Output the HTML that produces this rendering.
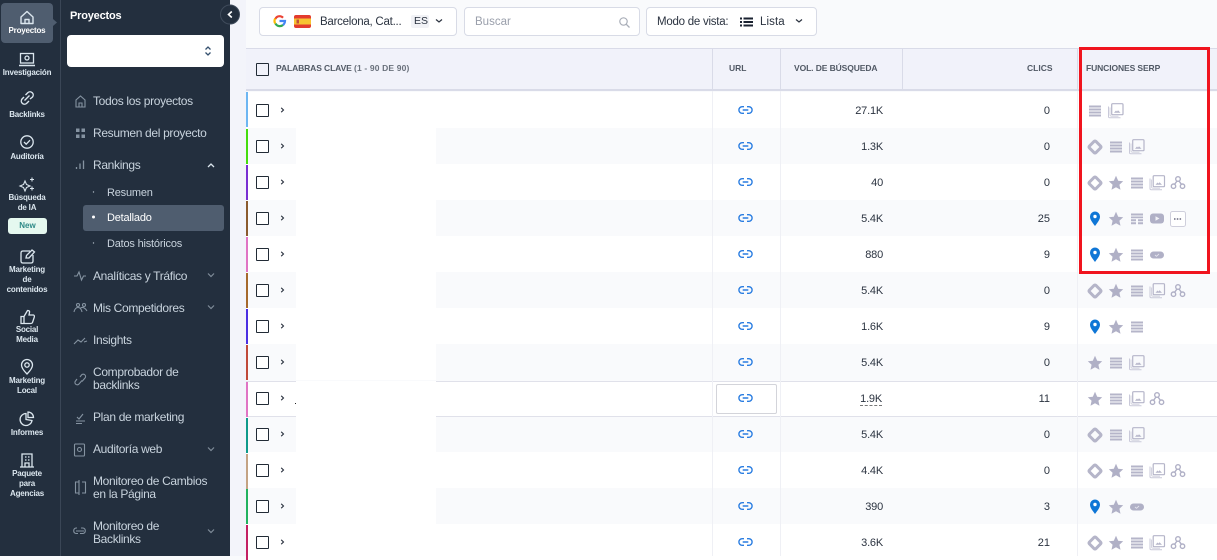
<!DOCTYPE html>
<html lang="es"><head><meta charset="utf-8"><title>Rankings</title>
<style>
html,body{margin:0;padding:0;width:1217px;height:556px;overflow:hidden;background:#f9fafc;font-family:"Liberation Sans",sans-serif}
.a{position:absolute}
.t{position:absolute;white-space:nowrap}
.r{position:absolute;left:246px;width:971px;height:36px}
.r.w{background:#fff}.r.g{background:#f9fafc}
.s{position:absolute;left:246px;width:2px;height:35px}
.b{position:absolute;left:296px;width:140px;height:36px;background:#fff}
.c{position:absolute;left:256px;width:10.500px;height:10.500px;border:1.500px solid #222b36;border-radius:1px;background:#fff}
.rail{position:absolute;width:54px;text-align:center;left:0;color:#dbe6ee;font-size:8px;font-weight:bold;line-height:10px;letter-spacing:-.2px}
.n{position:absolute;left:93px;color:#c8d3dd;font-size:12px;line-height:13px;white-space:nowrap;letter-spacing:-.33px}
.sub{position:absolute;left:107px;color:#c8d3dd;font-size:11px;white-space:nowrap;letter-spacing:-.2px}
.h{position:absolute;top:63px;font-size:8.500px;font-weight:bold;color:#515965;white-space:nowrap}
.v{position:absolute;width:60px;text-align:right;font-size:11px;color:#2b3340;letter-spacing:-.2px}
.k{position:absolute;left:1000px;width:50px;text-align:right;font-size:11px;color:#2b3340}
.box{position:absolute;top:7px;height:27px;background:#fff;border:1px solid #d8dbe6;border-radius:4px}
</style></head><body>

<div class="a" style="left:230px;top:0;width:16px;height:556px;background:#f3f4fa"></div>

<!-- toolbar -->
<div class="box" style="left:259px;width:196px"></div>
<div class="box" style="left:464px;width:174px"></div>
<div class="box" style="left:646px;width:169px"></div>
<div class="t" style="left:320px;top:16px;font-size:11.500px;color:#2b3340;letter-spacing:-.25px">Barcelona, Cat...</div>
<div class="a" style="left:411px;top:15px;width:18px;height:13px;background:#f1f2f6;border-radius:2px"></div>
<div class="t" style="left:414px;top:15px;font-size:10.500px;color:#2b3340">ES</div>
<div class="t" style="left:475px;top:16px;font-size:11.500px;color:#9a9fab">Buscar</div>
<div class="t" style="left:657px;top:16px;font-size:11.500px;color:#2b3340;letter-spacing:-.25px">Modo de vista:</div>
<div class="t" style="left:760px;top:16px;font-size:11.500px;color:#2b3340;letter-spacing:.1px">Lista</div>

<!-- table header -->
<div class="a" style="left:246px;top:48px;width:971px;height:43px;background:#f1f2fa;border-top:1px solid #d9dbe8;border-bottom:2px solid #d9dbe8;box-sizing:border-box"></div>
<div class="a" style="left:256px;top:63px;width:10.500px;height:10.500px;border:1.500px solid #222b36;border-radius:1px"></div>
<div class="h" style="left:276px;letter-spacing:-.1px">PALABRAS CLAVE <span style="letter-spacing:.15px;color:#6a717c">(1 - 90 DE 90)</span></div>
<div class="h" style="left:729px">URL</div>
<div class="h" style="left:794px;letter-spacing:-.1px">VOL. DE BÚSQUEDA</div>
<div class="h" style="left:1027px">CLICS</div>
<div class="h" style="left:1086px;letter-spacing:-.1px">FUNCIONES SERP</div>

<!-- rows -->
<div class="r w" style="top:92px"></div>
<div class="r g" style="top:128px"></div>
<div class="r w" style="top:164px"></div>
<div class="r g" style="top:200px"></div>
<div class="r w" style="top:236px"></div>
<div class="r g" style="top:272px"></div>
<div class="r w" style="top:308px"></div>
<div class="r g" style="top:344px"></div>
<div class="r w" style="top:381px;height:35px"></div>
<div class="r g" style="top:416px"></div>
<div class="r w" style="top:452px"></div>
<div class="r g" style="top:488px"></div>
<div class="r w" style="top:524px"></div>

<div class="b" style="top:128px"></div><div class="b" style="top:200px"></div><div class="b" style="top:272px"></div><div class="b" style="top:344px"></div><div class="b" style="top:416px"></div><div class="b" style="top:488px"></div>

<div class="a" style="left:246px;top:381px;width:971px;height:1px;background:#e0e1ea"></div>
<div class="a" style="left:246px;top:416px;width:971px;height:1px;background:#e0e1ea"></div>
<div class="a" style="left:296px;top:381px;width:140px;height:36px;background:#fff"></div>
<div class="a" style="left:295px;top:403px;width:1px;height:1px;background:#222"></div>

<!-- column lines -->
<div class="a" style="left:712px;top:48px;width:1px;height:43px;background:#d9dbe8"></div>
<div class="a" style="left:780px;top:48px;width:1px;height:43px;background:#d9dbe8"></div>
<div class="a" style="left:902px;top:48px;width:1px;height:43px;background:#d9dbe8"></div>
<div class="a" style="left:1077px;top:48px;width:1px;height:43px;background:#d9dbe8"></div>
<div class="a" style="left:712px;top:91px;width:1px;height:465px;background:#eff0f5"></div>
<div class="a" style="left:780px;top:91px;width:1px;height:465px;background:#eff0f5"></div>
<div class="a" style="left:1077px;top:91px;width:1px;height:465px;background:#eff0f5"></div>

<div class="a" style="left:716px;top:384px;width:59px;height:28px;background:#fff;border:1px solid #d3d4da;border-radius:2px"></div>

<!-- stripes -->
<div class="s" style="top:92px;background:#6db6f2"></div>
<div class="s" style="top:129px;background:#44dd0e"></div>
<div class="s" style="top:165px;background:#7a2fd2"></div>
<div class="s" style="top:201px;background:#8a5a2e"></div>
<div class="s" style="top:237px;background:#e074c4"></div>
<div class="s" style="top:273px;background:#a5692c"></div>
<div class="s" style="top:309px;background:#4b2fe2"></div>
<div class="s" style="top:345px;background:#c0493a"></div>
<div class="s" style="top:382px;background:#e074c4"></div>
<div class="s" style="top:418px;background:#0f9a8a"></div>
<div class="s" style="top:454px;background:#c4a384"></div>
<div class="s" style="top:489px;background:#22b25f"></div>
<div class="s" style="top:525px;background:#c42063"></div>

<!-- checkboxes -->
<div class="c" style="top:104px"></div><div class="c" style="top:140px"></div><div class="c" style="top:176px"></div><div class="c" style="top:212px"></div><div class="c" style="top:248px"></div><div class="c" style="top:284px"></div><div class="c" style="top:320px"></div><div class="c" style="top:356px"></div><div class="c" style="top:392px"></div><div class="c" style="top:428px"></div><div class="c" style="top:464px"></div><div class="c" style="top:500px"></div><div class="c" style="top:536px"></div>

<!-- search volume -->
<div class="v" style="left:823px;top:105px">27.1K</div>
<div class="v" style="left:823px;top:141px">1.3K</div>
<div class="v" style="left:823px;top:177px">40</div>
<div class="v" style="left:823px;top:213px">5.4K</div>
<div class="v" style="left:823px;top:249px">880</div>
<div class="v" style="left:823px;top:285px">5.4K</div>
<div class="v" style="left:823px;top:321px">1.6K</div>
<div class="v" style="left:823px;top:357px">5.4K</div>
<div class="v" style="left:822px;top:393px;"><span style="border-bottom:1px dashed #777">1.9K</span></div>
<div class="v" style="left:823px;top:429px">5.4K</div>
<div class="v" style="left:823px;top:465px">4.4K</div>
<div class="v" style="left:823px;top:501px">390</div>
<div class="v" style="left:823px;top:537px">3.6K</div>

<!-- clicks -->
<div class="k" style="top:105px">0</div>
<div class="k" style="top:141px">0</div>
<div class="k" style="top:177px">0</div>
<div class="k" style="top:213px">25</div>
<div class="k" style="top:249px">9</div>
<div class="k" style="top:285px">0</div>
<div class="k" style="top:321px">9</div>
<div class="k" style="top:357px">0</div>
<div class="k" style="top:393px">11</div>
<div class="k" style="top:429px">0</div>
<div class="k" style="top:465px">0</div>
<div class="k" style="top:501px">3</div>
<div class="k" style="top:537px">21</div>

<!-- sidebar -->
<div class="a" style="left:0;top:0;width:230px;height:556px;background:#232f3e"></div>
<div class="a" style="left:60px;top:0;width:1px;height:556px;background:#3a4656"></div>
<div class="a" style="left:1px;top:3px;width:52px;height:40px;background:#4f5d6f;border-radius:4px"></div>
<div class="a" style="left:67px;top:35px;width:157px;height:32px;background:#fff;border-radius:4px"></div>
<div class="a" style="left:83px;top:205px;width:141px;height:26px;background:#4f5d6f;border-radius:3px"></div>

<div class="rail" style="top:26px;color:#fff">Proyectos</div>
<div class="rail" style="top:68px">Investigación</div>
<div class="rail" style="top:110px">Backlinks</div>
<div class="rail" style="top:152px">Auditoría</div>
<div class="rail" style="top:193px">Búsqueda<br>de IA</div>
<div class="a" style="left:8px;top:218px;width:39px;height:16px;background:#e5f8ef;border-radius:3px;color:#2d8a87;font-size:8px;font-weight:bold;text-align:center;line-height:15px">New</div>
<div class="rail" style="top:265px">Marketing<br>de<br>contenidos</div>
<div class="rail" style="top:325px">Social<br>Media</div>
<div class="rail" style="top:376px">Marketing<br>Local</div>
<div class="rail" style="top:428px">Informes</div>
<div class="rail" style="top:469px">Paquete<br>para<br>Agencias</div>

<div class="t" style="left:70px;top:10px;font-size:11px;font-weight:bold;color:#fff;letter-spacing:-.2px">Proyectos</div>
<div class="n" style="top:95px">Todos los proyectos</div>
<div class="n" style="top:127px">Resumen del proyecto</div>
<div class="n" style="top:159px">Rankings</div>
<div class="sub" style="top:187px">Resumen</div>
<div class="sub" style="top:212px;color:#fff">Detallado</div>
<div class="sub" style="top:238px">Datos históricos</div>
<div class="n" style="top:270px">Analíticas y Tráfico</div>
<div class="n" style="top:302px">Mis Competidores</div>
<div class="n" style="top:334px">Insights</div>
<div class="n" style="top:366px">Comprobador de<br>backlinks</div>
<div class="n" style="top:411px">Plan de marketing</div>
<div class="n" style="top:443px">Auditoría web</div>
<div class="n" style="top:475px">Monitoreo de Cambios<br>en la Página</div>
<div class="n" style="top:520px">Monitoreo de<br>Backlinks</div>

<!-- icons -->
<svg class="a" style="left:0;top:0" width="1217" height="556" viewBox="0 0 1217 556" fill="none">
<defs>
<g id="li"><path d="M-1.500 -3.300H-3.300A3.300 3.300 0 0 0-3.300 3.300H-1.500M1.500 -3.300H3.300A3.300 3.300 0 0 1 3.300 3.300H1.500M-2.800 0H2.800" stroke="#2a7de1" stroke-width="1.400"/></g>
<g id="ch"><path d="M-1.300 -2.200L1 0L-1.300 2.200" stroke="#2b3340" stroke-width="1.100"/></g>
<g id="d"><rect x="-4.600" y="-4.600" width="9.200" height="9.200" rx="1.200" transform="rotate(45)" stroke="#b5b5c9" stroke-width="3"/></g>
<g id="st"><path d="M0 -7.200L2.200 -2.300L7.200 -1.800L3.400 1.700L4.500 6.800L0 4.200L-4.500 6.800L-3.400 1.700L-7.200 -1.800L-2.200 -2.300Z" fill="#b0b0c6"/></g>
<g id="ln"><path d="M-6 -5h12v2h-12zM-6 -2h12v2h-12zM-6 1h12v2h-12zM-6 4h12v2h-12z" fill="#b5b5c9"/></g>
<g id="im"><path d="M-7 -4.500V5.500Q-7 6.800 -5.700 6.800H5" stroke="#c9c9d9" stroke-width="1"/><path d="M-5.500 -3.500V3.800Q-5.500 5.200 -4 5.200H3" stroke="#d4d4e0" stroke-width="1"/><rect x="-3.800" y="-7.300" width="11.300" height="11" rx="1" stroke="#b5b5c9" stroke-width="1.200"/><path d="M-1.500 1.800L0.500 -.5L1.500 .6L2.500 -.8L5 1.800Z" fill="#b5b5c9"/></g>
<g id="tr" stroke="#b0b0c6" stroke-width="1.400"><circle cx="0" cy="-4" r="2.300"/><circle cx="-4.500" cy="3.200" r="2.200"/><circle cx="4.500" cy="3.200" r="2.200"/><path d="M-1 -2L-3.300 1.200M1 -2L3.300 1.200"/></g>
<g id="p"><path d="M0 8C-3 4 -5 1.500 -5 -1.500A5 5 0 0 1 5 -1.500C5 1.500 3 4 0 8Z" fill="#0f76d6"/><circle cx="0" cy="-1.500" r="1.700" fill="#fff"/></g>
<g id="pl"><rect x="-7" y="-3.500" width="14" height="7" rx="3.500" fill="#b0b0c6"/><path d="M-2 0L-.5 1.300L2 -1" stroke="#e4e4ee" stroke-width=".9"/></g>
<g id="ta"><path d="M-6 -5h12v2h-12zM-6 -2h12v1.800h-12zM-6 .8h5v2h-5zM1 .8h5v2h-5zM-6 3.800h5v2h-5zM1 3.800h5v2h-5z" fill="#b5b5c9"/></g>
<g id="vi"><rect x="-7" y="-5" width="14" height="10" rx="3" fill="#b0b0c6"/><path d="M-1.500 -2.200L2.500 0L-1.500 2.200Z" fill="#f1f1f6"/></g>
<g id="chev"><path d="M-3 -1.500L0 1.500L3 -1.500" stroke="#7f8c99" stroke-width="1.200"/></g>
</defs>

<!-- link icons -->
<use href="#li" x="745.500" y="110"/><use href="#li" x="745.500" y="146"/><use href="#li" x="745.500" y="182"/><use href="#li" x="745.500" y="218"/><use href="#li" x="745.500" y="254"/><use href="#li" x="745.500" y="290"/><use href="#li" x="745.500" y="326"/><use href="#li" x="745.500" y="362"/><use href="#li" x="745.500" y="398"/><use href="#li" x="745.500" y="434"/><use href="#li" x="745.500" y="470"/><use href="#li" x="745.500" y="506"/><use href="#li" x="745.500" y="542"/>
<!-- row chevrons -->
<use href="#ch" x="282.500" y="110"/><use href="#ch" x="282.500" y="146"/><use href="#ch" x="282.500" y="182"/><use href="#ch" x="282.500" y="218"/><use href="#ch" x="282.500" y="254"/><use href="#ch" x="282.500" y="290"/><use href="#ch" x="282.500" y="326"/><use href="#ch" x="282.500" y="362"/><use href="#ch" x="282.500" y="398"/><use href="#ch" x="282.500" y="434"/><use href="#ch" x="282.500" y="470"/><use href="#ch" x="282.500" y="506"/><use href="#ch" x="282.500" y="542"/>

<!-- serp features -->
<use href="#ln" x="1095" y="110.500"/><use href="#im" x="1115.500" y="111"/>
<use href="#d" x="1095" y="147"/><use href="#ln" x="1116" y="146.500"/><use href="#im" x="1136.500" y="147"/>
<use href="#d" x="1095" y="183"/><use href="#st" x="1116" y="183"/><use href="#ln" x="1137" y="182.500"/><use href="#im" x="1157" y="183"/><use href="#tr" x="1178" y="183"/>
<use href="#p" x="1095" y="218"/><use href="#st" x="1116" y="219"/><use href="#ta" x="1137" y="218.500"/><use href="#vi" x="1157" y="218.500"/>
<rect x="1170.500" y="211.500" width="15" height="15" rx="2" fill="#fff" stroke="#cfcfdc"/><path d="M1174 219h8" stroke="#6a6a80" stroke-width="1.500" stroke-dasharray="1.500 1.300"/>
<use href="#p" x="1095" y="254"/><use href="#st" x="1116" y="255"/><use href="#ln" x="1137" y="254.500"/><use href="#pl" x="1157" y="255"/>
<use href="#d" x="1095" y="291"/><use href="#st" x="1116" y="291"/><use href="#ln" x="1137" y="290.500"/><use href="#im" x="1157" y="291"/><use href="#tr" x="1178" y="291"/>
<use href="#p" x="1095" y="326"/><use href="#st" x="1116" y="327"/><use href="#ln" x="1137" y="326.500"/>
<use href="#st" x="1095" y="363"/><use href="#ln" x="1116" y="362.500"/><use href="#im" x="1136.500" y="363"/>
<use href="#st" x="1095" y="399"/><use href="#ln" x="1116" y="398.500"/><use href="#im" x="1136.500" y="399"/><use href="#tr" x="1157" y="399"/>
<use href="#d" x="1095" y="435"/><use href="#ln" x="1116" y="434.500"/><use href="#im" x="1136.500" y="435"/>
<use href="#d" x="1095" y="471"/><use href="#st" x="1116" y="471"/><use href="#ln" x="1137" y="470.500"/><use href="#im" x="1157" y="471"/><use href="#tr" x="1178" y="471"/>
<use href="#p" x="1095" y="506"/><use href="#st" x="1116" y="507"/><use href="#pl" x="1137" y="507"/>
<use href="#d" x="1095" y="543"/><use href="#st" x="1116" y="543"/><use href="#ln" x="1137" y="542.500"/><use href="#im" x="1157" y="543"/><use href="#tr" x="1178" y="543"/>

<!-- toolbar icons -->
<g stroke-width="2.200"><path d="M279.500 16.200A4.800 4.800 0 0 0 275.300 19" stroke="#ea4335"/><path d="M279.500 16.200A4.800 4.800 0 0 1 283 17.700" stroke="#ea4335"/><path d="M275.200 18.500A5 5 0 0 0 275.200 23.500" stroke="#fbbc05"/><path d="M275.400 23.500A5 5 0 0 0 283 25" stroke="#34a853"/><path d="M279.500 21H285A5.500 5.500 0 0 1 283 25" stroke="#4285f4"/></g>
<rect x="294" y="15" width="17" height="13" rx="2" fill="#e33b2e"/><rect x="294" y="18.500" width="17" height="6" fill="#f7c331"/><rect x="296.500" y="19.500" width="2.500" height="4" fill="#c0503a"/>
<path d="M436 19.500L439 22L442 19.500" stroke="#2b3340" stroke-width="1.200"/>
<circle cx="623.500" cy="21.500" r="3.700" stroke="#a9aeb8" stroke-width="1.200"/><path d="M626.300 24.300L629.500 27.500" stroke="#a9aeb8" stroke-width="1.300"/>
<path d="M740 17.500h2v2h-2zM740 21h2v2h-2zM740 24.500h2v2h-2zM743.500 17.500h9.500v2h-9.500zM743.500 21h9.500v2h-9.500zM743.500 24.500h9.500v2h-9.500z" fill="#1a2230"/>
<path d="M796 19.500L799 22L802 19.500" stroke="#2b3340" stroke-width="1.200"/>

<!-- collapse toggle -->
<circle cx="230" cy="14.500" r="9.500" fill="#232f3e" stroke="#3f4b5b"/><path d="M231.800 11.500L228.500 14.500L231.800 17.500" stroke="#fff" stroke-width="1.600"/>
<path d="M53 19L57 22.500L53 26Z" fill="#4f5d6f"/>

<!-- select arrows -->
<path d="M205.500 49.500L208 47L210.500 49.500M205.500 52.500L208 55L210.500 52.500" stroke="#34506e" stroke-width="1.300"/>

<!-- rail icons -->
<g stroke="#dbe6ee" stroke-width="1.300">
<path d="M21 17V23.500H33V17L27 11.500Z M25 23.500V19.500H29V23.500" stroke-width="1.400" stroke-linejoin="round"/>
<rect x="20.500" y="53.500" width="13" height="9.500"/><path d="M19 65.500H35" stroke-width="1.500"/><circle cx="27" cy="58" r="2"/>
<path d="M24 97L22 99A3.200 3.200 0 0 0 26.500 103.500L29 101M30 99L32.500 97A3.200 3.200 0 0 0 28 92.500L25.500 95M24.500 100.500L29.500 95.500" stroke-width="1.400"/>
<circle cx="27" cy="142" r="6.200"/><path d="M24 142L26.200 144.200L30 140.200"/>
<path d="M25 181L26.500 184.500L30 186L26.500 187.500L25 191L23.500 187.500L20 186L23.500 184.500ZM32 177.500V181.500M30 179.500H34M32 186.500V190.500M30 188.500H34" stroke-width="1.100"/>
<path d="M30 251H23Q21 251 21 253V261Q21 263 23 263H31Q33 263 33 261V255M26 258L26.500 255.500L32 250L34.500 252L29 258Z"/>
<path d="M21 316.500V323.500H24V316.500ZM24 316.500L27.500 310.500Q30 310.500 29.500 312.500L29 315H33.500Q35 315.500 34 318L32.500 322.500Q32 323.500 30.500 323.500H24" stroke-width="1.300"/>
<path d="M27 374C23 370 21.500 367.500 21.500 365A5.500 5.500 0 0 1 32.500 365C32.500 367.500 31 370 27 374Z"/><circle cx="27" cy="365" r="2.200"/>
<path d="M32 420.500A6 6 0 1 1 26 413.500V419.500Z M28 412V417.500H33.500A5.500 5.500 0 0 0 28 412Z"/>
<path d="M22 467V454H32V467M20 467H34M25 457h1.500M28 457h1.500M25 460h1.500M28 460h1.500M25 463h4v4h-4z"/>
</g>

<!-- nav icons -->
<g stroke="#8593a1" stroke-width="1.100">
<path d="M76 107V100L80.500 96L85 100V107ZM79 107V103H82V107"/>
<path d="M76 128.500h3.500v3.500H76zM81.500 128.500h3.500v3.500h-3.500zM76 134.500h3.500v3.500H76zM81.500 134.500h3.500v3.500h-3.500z" fill="#8593a1" stroke="none"/>
<path d="M76.500 169V167M80 169V163.500M83.500 169V160.500" stroke-width="1.300"/>
<path d="M74 276H77L79 272L81.500 280L83.500 276H86"/>
<circle cx="78" cy="305" r="1.500"/><circle cx="84" cy="305" r="1.500"/><path d="M74 312Q75 307.500 78 307.500Q81 307.500 82 312M80.500 308Q84 306 87 311"/>
<path d="M74 344L78 340L81 342L85 338M84 342L87 341"/>
<path d="M77 379L75.500 381A2.300 2.300 0 0 0 79 384L82 380.500M80 377L81.500 375A2.300 2.300 0 0 1 85 378L82 381.500"/>
<path d="M76 421H85M76 423.500H82M77 417L79 419L83 414"/>
<rect x="74.500" y="444" width="10" height="12" rx="1"/><circle cx="79.500" cy="449.500" r="2"/>
<path d="M79 482H75.500V493H79M79 480V495M82 482H85.500V493H82"/>
<path d="M77 528H76A2.800 2.800 0 0 0 76 533.500H78M81 528H83A2.800 2.800 0 0 1 83 533.500H80M76 531H84"/>
</g>
<use href="#chev" x="211" y="275"/><use href="#chev" x="211" y="307"/><use href="#chev" x="211" y="449"/><use href="#chev" x="211" y="531"/>
<path d="M208 167L211 164L214 167" stroke="#dbe6ee" stroke-width="1.300"/>
<circle cx="93.500" cy="192" r=".7" fill="#aab5c0"/><circle cx="93.500" cy="217" r="1.500" fill="#fff"/><circle cx="93.500" cy="243" r=".7" fill="#aab5c0"/>

<!-- red annotation -->
<rect x="1080.500" y="48.500" width="128" height="224" stroke="#f0141e" stroke-width="3"/>
</svg>
</body></html>
